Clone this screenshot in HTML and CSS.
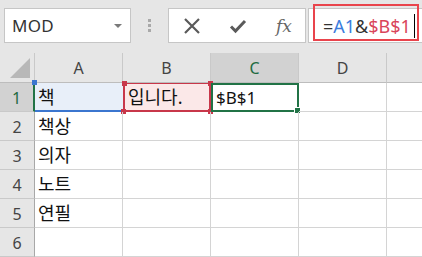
FILE: index.html
```html
<!DOCTYPE html>
<html lang="ko">
<head>
<meta charset="utf-8">
<link rel="stylesheet" href="styles.css">
</head>
<body>
<div class="app">
  <div class="topbar">
    <div class="namebox">
      <span class="name">MOD</span>
      <span class="drop"></span>
    </div>
    <div class="grip"><i></i><i></i><i></i></div>
    <div class="btns">
      <svg class="ic" width="20" height="20" viewBox="0 0 20 20"><path d="M3 3 L17 17 M17 3 L3 17" stroke="#5a5a5a" stroke-width="2.2" fill="none"/></svg>
      <svg class="ic" width="20" height="20" viewBox="0 0 20 20"><path d="M3 10.5 L7.5 15 L17 5" stroke="#5a5a5a" stroke-width="3" fill="none"/></svg>
      <span class="fx">fx</span>
    </div>
    <div class="input">
      <span class="formula">=<span class="ref-a">A1</span>&amp;<span class="ref-b">$B$1</span></span><span class="caret"></span>
      <div class="annot"></div>
    </div>
  </div>
  <div class="grid">
    <div class="corner"><span class="tri"></span></div>
    <div class="ch">A</div>
    <div class="ch">B</div>
    <div class="ch sel">C</div>
    <div class="ch">D</div>
    <div class="ch"></div>

    <div class="rh sel">1</div>
    <div class="c a1 ko">책<span class="h tl"></span></div>
    <div class="c b1 ko">입니다.<span class="h tl"></span><span class="h tr"></span><span class="h bl"></span><span class="h br"></span></div>
    <div class="c c1">$B$1<span class="h br"></span></div>
    <div class="c"></div>
    <div class="c"></div>

    <div class="rh">2</div>
    <div class="c ko">책상</div><div class="c"></div><div class="c"></div><div class="c"></div><div class="c"></div>
    <div class="rh">3</div>
    <div class="c ko">의자</div><div class="c"></div><div class="c"></div><div class="c"></div><div class="c"></div>
    <div class="rh">4</div>
    <div class="c ko">노트</div><div class="c"></div><div class="c"></div><div class="c"></div><div class="c"></div>
    <div class="rh">5</div>
    <div class="c ko">연필</div><div class="c"></div><div class="c"></div><div class="c"></div><div class="c"></div>
    <div class="rh">6</div>
    <div class="c"></div><div class="c"></div><div class="c"></div><div class="c"></div><div class="c"></div>
  </div>
</div>
</body>
</html>
```

FILE: styles.css
```css
html, body {
  margin: 0;
  padding: 0;
}
body {
  width: 422px;
  height: 257px;
  overflow: hidden;
  background: #ffffff;
  font-family: "Noto Sans", "Noto Sans CJK KR", sans-serif;
}
.app {
  width: 422px;
  height: 257px;
  overflow: hidden;
}
.topbar {
  height: 53px;
  box-sizing: border-box;
  background: #e6e6e6;
  display: flex;
  align-items: flex-start;
  padding-top: 8px;
}
.namebox {
  margin-left: 4px;
  width: 127px;
  height: 35px;
  box-sizing: border-box;
  background: #fff;
  border: 1px solid #c6c6c6;
  display: flex;
  align-items: center;
  justify-content: space-between;
  padding: 0 8px 0 7px;
}
.name {
  font-size: 17px;
  color: #333;
  letter-spacing: 0.3px;
}
.drop {
  width: 0;
  height: 0;
  border-left: 4px solid transparent;
  border-right: 4px solid transparent;
  border-top: 4px solid #7a7a7a;
}
.grip {
  width: 37px;
  height: 35px;
  display: flex;
  flex-direction: column;
  align-items: center;
  justify-content: center;
  gap: 2px;
}
.grip i {
  display: block;
  width: 3px;
  height: 3px;
  background: #a9a9a9;
}
.btns {
  width: 138px;
  height: 35px;
  box-sizing: border-box;
  background: #fff;
  border: 1px solid #c6c6c6;
  display: flex;
  align-items: center;
  padding-left: 13px;
  gap: 26px;
}
.ic {
  display: block;
}
.fx {
  font-family: "DejaVu Serif", "Liberation Serif", serif;
  font-style: italic;
  font-size: 17px;
  color: #666;
  margin-left: 2px;
}
.input {
  position: relative;
  margin-left: 2px;
  flex: 1;
  height: 35px;
  box-sizing: border-box;
  background: #fff;
  border: 1px solid #c6c6c6;
  border-right: none;
  display: flex;
  align-items: center;
  padding-left: 14px;
}
.formula {
  font-size: 18px;
  color: #333;
}
.ref-a { color: #3b7ddd; }
.ref-b { color: #d9455b; }
.caret {
  display: inline-block;
  width: 1px;
  height: 24px;
  background: #000;
  margin-left: 3px;
}
.annot {
  position: absolute;
  left: 4px;
  top: -5px;
  width: 106px;
  height: 37px;
  box-sizing: border-box;
  border: 2px solid #e9444c;
}
.grid {
  display: grid;
  grid-template-columns: 35px 88px 88px 88px 88px 88px;
  grid-template-rows: 30px repeat(6, 29px);
}
.corner, .ch, .rh {
  background: #e6e6e6;
  box-sizing: border-box;
  border-right: 1px solid #c9c9c9;
  border-bottom: 1px solid #bdbdbd;
  color: #444;
  font-size: 16px;
  display: flex;
  align-items: center;
  justify-content: center;
}
.corner {
  position: relative;
}
.tri {
  position: absolute;
  right: 4px;
  bottom: 4px;
  width: 0;
  height: 0;
  border-left: 20px solid transparent;
  border-bottom: 20px solid #b8b8b8;
}
.rh {
  border-right: 1px solid #a8a8a8;
  border-bottom: 1px solid #c9c9c9;
  padding-top: 2px;
}
.ch.sel, .rh.sel {
  background: #d2d2d2;
  color: #1e6b41;
}
.rh.sel {
  border-right: 2px solid #217346;
}
.c {
  position: relative;
  box-sizing: border-box;
  border-right: 1px solid #d4d4d4;
  border-bottom: 1px solid #d4d4d4;
  font-size: 17px;
  color: #111;
  padding-left: 3px;
  display: flex;
  align-items: center;
  line-height: 1;
}
.ko {
  font-size: 18px;
}
.a1 {
  background: #e8eff9;
  border-bottom: 2px solid #3b76cf;
  border-right: none;
}
.b1 {
  background: #fbe8e8;
  border: 2px solid #c8374a;
  border-top-width: 1px;
}
.c1 {
  border: 2px solid #217346;
}
.h {
  position: absolute;
  width: 5px;
  height: 5px;
  background: #c8374a;
}
.a1 .h { background: #3b76cf; }
.c1 .h {
  background: #217346;
  border: 1px solid #fff;
}
.tl { left: -3px; top: -3px; }
.tr { right: -4px; top: -3px; }
.bl { left: -4px; bottom: -4px; }
.br { right: -4px; bottom: -4px; }
```
